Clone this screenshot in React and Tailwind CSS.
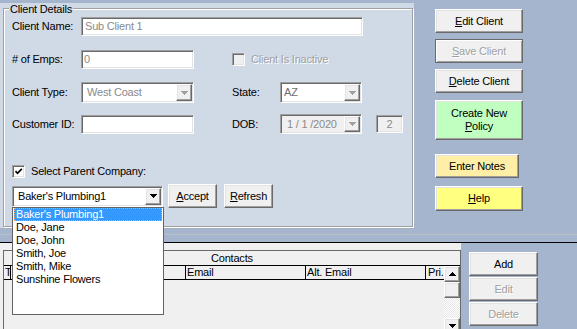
import React from "react";

const sunken =
  "border border-t-[#a0a0a0] border-l-[#a0a0a0] border-b-white border-r-white shadow-[inset_1px_1px_0_#696969,inset_-1px_-1px_0_#e3e3e3]";
const raised =
  "border border-t-white border-l-white border-b-[#696969] border-r-[#696969] shadow-[inset_-1px_-1px_0_#a0a0a0,inset_1px_1px_0_#e3e3e3]";
const embossed = "text-[#a0a0a0] [text-shadow:1px_1px_0_#fff]";

function Arrow({ up = false, color = "#000" }) {
  return (
    <svg width="7" height="4" viewBox="0 0 7 4" shapeRendering="crispEdges">
      <path
        d={
          up
            ? "M3 0h1v1H3z M2 1h3v1H2z M1 2h5v1H1z M0 3h7v1H0z"
            : "M0 0h7v1H0z M1 1h5v1H1z M2 2h3v1H2z M3 3h1v1H3z"
        }
        fill={color}
      />
    </svg>
  );
}

function DropBtn({ disabled, className = "h-[17px]" }) {
  return (
    <div
      className={`${raised} bg-[#f0f0f0] w-[16px] ${className} flex items-center justify-center shrink-0`}
    >
      <Arrow color={disabled ? "#a0a0a0" : "#000"} />
    </div>
  );
}

function Check({ checked, disabled }) {
  return (
    <div
      className={`${sunken} w-[13px] h-[13px] shrink-0 flex items-center justify-center ${
        disabled ? "bg-[#f0f0f0]" : "bg-white"
      }`}
    >
      {checked && (
        <svg width="9" height="9" viewBox="0 0 9 9">
          <path d="M1.5 4.2 L3.5 6.3 L7.8 1.8" stroke="#000" strokeWidth="1.7" fill="none" />
        </svg>
      )}
    </div>
  );
}

function Btn({ className = "", children }) {
  return (
    <div className={`${raised} flex items-center justify-center whitespace-nowrap ${className}`}>
      {children}
    </div>
  );
}

export default function App() {
  const others = ["Doe, Jane", "Doe, John", "Smith, Joe", "Smith, Mike", "Sunshine Flowers"];
  return (
    <div className="relative w-[577px] h-[329px] overflow-hidden bg-[#a4b5cd] text-[11px] leading-[13px] tracking-[-0.2px] text-black font-['Liberation_Sans',Arial,sans-serif]">
      {/* top section */}
      <div className="flex h-[229px] pt-[3px]">
        <div className="w-[414px] h-[226px] bg-[#d0dae6] border-b border-[#a8b0bc] pt-[5px] pl-[3px]">
          <div className="relative w-[410px] h-[219px] border border-[#a0a0a0] shadow-[inset_1px_1px_0_#fff,1px_1px_0_#fff] pl-[8px] pt-[8px] flex flex-col">
            <span className="absolute left-[5px] top-[-6px] px-[1px] bg-[#d0dae6] whitespace-nowrap">
              Client Details
            </span>

            {/* row 1 */}
            <div className="flex items-center h-[19px]">
              <span className="w-[69px] whitespace-nowrap">Client Name:</span>
              <div className={`${sunken} w-[282px] h-[19px] bg-white flex items-center pl-[3px] text-[#8a8a8a]`}>
                Sub Client 1
              </div>
            </div>

            {/* row 2 */}
            <div className="flex items-center h-[19px] mt-[14px]">
              <span className="w-[69px] whitespace-nowrap"># of Emps:</span>
              <div className={`${sunken} w-[113px] h-[19px] bg-white flex items-center pl-[2px] text-[#8a8a8a]`}>
                0
              </div>
              <div className="ml-[38px]">
                <Check disabled />
              </div>
              <span className={`ml-[6px] whitespace-nowrap ${embossed}`}>Client Is Inactive</span>
            </div>

            {/* row 3 */}
            <div className="flex items-center h-[21px] mt-[13px]">
              <span className="w-[69px] whitespace-nowrap">Client Type:</span>
              <div className={`${sunken} w-[113px] h-[21px] bg-white flex items-center justify-between pl-[5px] pr-[1px] text-[#8a8a8a]`}>
                <span className="whitespace-nowrap">West Coast</span>
                <DropBtn disabled />
              </div>
              <span className="ml-[38px] w-[48px]">State:</span>
              <div className={`${sunken} w-[82px] h-[21px] bg-white flex items-center justify-between pl-[3px] pr-[1px] text-[#6e6e6e]`}>
                <span>AZ</span>
                <DropBtn disabled />
              </div>
            </div>

            {/* row 4 */}
            <div className="flex items-center h-[20px] mt-[11px]">
              <span className="w-[69px] whitespace-nowrap">Customer ID:</span>
              <div className={`${sunken} w-[113px] h-[19px] bg-white`} />
              <span className="ml-[38px] w-[48px]">DOB:</span>
              <div className={`${sunken} w-[82px] h-[20px] bg-[#f0f0f0] flex items-center justify-between pl-[6px] pr-[1px] text-[#8a8a8a]`}>
                <span className="whitespace-nowrap">1 / 1 /2020</span>
                <DropBtn disabled className="h-[16px]" />
              </div>
              <div className={`${sunken} ml-[14px] w-[27px] h-[18px] bg-[#f0f0f0] flex items-center justify-center text-[#8a8a8a]`}>
                2
              </div>
            </div>

            {/* row 5 */}
            <div className="flex items-center h-[13px] mt-[31px]">
              <Check checked />
              <span className="ml-[6px] whitespace-nowrap">Select Parent Company:</span>
            </div>

            {/* row 6 */}
            <div className="flex items-center h-[24px] mt-[6px]">
              <div className={`${sunken} w-[151px] h-[21px] bg-white flex items-center justify-between pl-[5px] pr-[1px]`}>
                <span className="whitespace-nowrap">Baker's Plumbing1</span>
                <DropBtn />
              </div>
              <Btn className="ml-[5px] w-[49px] h-[24px] bg-[#f0f0f0]">
                <span className="underline">A</span>ccept
              </Btn>
              <Btn className="ml-[7px] w-[49px] h-[24px] bg-[#f0f0f0]">
                <span className="underline">R</span>efresh
              </Btn>
            </div>
          </div>
        </div>

        {/* right buttons */}
        <div className="flex flex-col pl-[21px] pt-[6px]">
          <Btn className="w-[88px] h-[24px] bg-[#f0f0f0]">
            <span className="underline">E</span>dit Client
          </Btn>
          <div
            className={`mt-[6px] w-[88px] h-[24px] bg-[#f0f0f0] border border-[#696969] shadow-[inset_1px_1px_0_#fff,inset_-1px_-1px_0_#a0a0a0] flex items-center justify-center whitespace-nowrap ${embossed}`}
          >
            <span className="underline">S</span>ave Client
          </div>
          <Btn className="mt-[6px] w-[88px] h-[24px] bg-[#f0f0f0]">
            <span className="underline">D</span>elete Client
          </Btn>
          <Btn className="mt-[7px] w-[88px] h-[40px] bg-[#c0ffc0] flex-col text-center">
            <span>Create New</span>
            <span>
              <span className="underline">P</span>olicy
            </span>
          </Btn>
          <Btn className="mt-[14px] w-[84px] h-[24px] bg-[#ffefa6]">Enter Notes</Btn>
          <Btn className="mt-[8px] w-[88px] h-[25px] bg-[#ffff80]">
            <span className="underline">H</span>elp
          </Btn>
        </div>
      </div>

      {/* separator band */}
      <div className="h-[5px]" />
      <div className="h-px bg-[#b9c0ca]" />
      <div className="h-[7px]" />
      <div className="h-px bg-black" />

      {/* bottom section */}
      <div className="flex h-[86px]">
        <div className="w-[461px] bg-[#f0f0f0] pt-[7px] pl-[3px]">
          <div className="w-[458px] h-[86px] border border-b-0 border-[#696969] bg-[#f0f0f0] flex flex-col">
            <div className="h-[15px] border-b border-black pl-[207px] flex items-center">Contacts</div>
            <div className="flex">
              <div className="w-[440px] flex flex-col">
                <div className="flex h-[14px] border-b border-black">
                  <div className="w-[7px] border-r border-black pl-[1px] overflow-hidden">T</div>
                  <div className="w-[175px] border-r border-black" />
                  <div className="w-[120px] border-r border-black pl-[1px] overflow-hidden">Email</div>
                  <div className="w-[120px] border-r border-black pl-[1px] overflow-hidden">Alt. Email</div>
                  <div className="w-[18px] pl-[2px] overflow-hidden whitespace-nowrap">Pri.</div>
                </div>
              </div>
              <div className="w-[16px] flex flex-col">
                <div className={`${raised} h-[16px] bg-[#f0f0f0] flex items-center justify-center`}>
                  <Arrow up />
                </div>
                <div className={`${raised} h-[16px] bg-[#f0f0f0]`} />
                <div className="h-[20px] bg-[image:repeating-conic-gradient(#ffffff_0_25%,#e6e6e6_0_50%)] bg-[length:2px_2px]" />
                <div className={`${raised} h-[16px] bg-[#f0f0f0] flex items-center justify-center`}>
                  <Arrow />
                </div>
              </div>
            </div>
          </div>
        </div>
        <div className="pl-[8px] pt-[9px] flex flex-col gap-px">
          <Btn className="w-[69px] h-[24px] bg-[#f0f0f0]">Add</Btn>
          <Btn className={`w-[69px] h-[24px] bg-[#f0f0f0] ${embossed}`}>Edit</Btn>
          <Btn className={`w-[69px] h-[24px] bg-[#f0f0f0] ${embossed}`}>Delete</Btn>
        </div>
      </div>

      {/* open dropdown list */}
      <div className="absolute left-[12px] top-[207px] w-[152px] h-[108px] bg-white border border-[#646464] px-px">
        <div className="h-[13px] bg-[#3399ff] text-white border border-dotted border-[#f4a460] pl-[1px] flex items-center whitespace-nowrap">
          Baker's Plumbing1
        </div>
        {others.map((n) => (
          <div key={n} className="h-[13px] pl-[2px] flex items-center whitespace-nowrap">
            {n}
          </div>
        ))}
      </div>
    </div>
  );
}
